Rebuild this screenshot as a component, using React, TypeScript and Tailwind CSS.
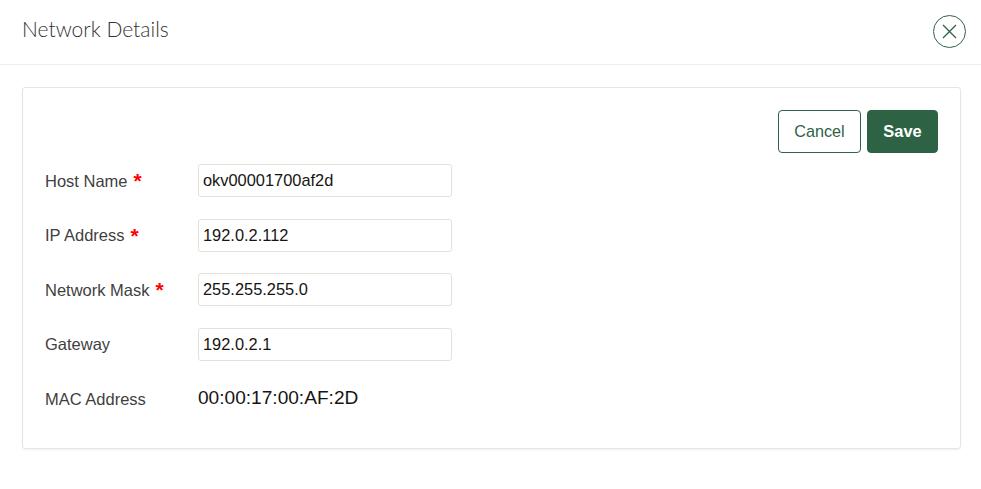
import React from "react";

function Row({ label, required, value }: { label: string; required?: boolean; value: string }) {
  return (
    <div className="flex items-center h-[33px] mb-[21.5px]">
      <label className="w-[153px] shrink-0 flex items-center text-[16.5px] text-[#3f3f3f] pt-[1px]">
        {label}
        {required && <span className="ml-[6px] text-[#ff0000] text-[21px] font-bold leading-none -mt-[1px]">*</span>}
      </label>
      <input
        readOnly
        value={value}
        className="w-[254px] h-[33px] px-[4px] text-[16.4px] text-[#161513] bg-white border border-[#e4e1d8] rounded-[3px] outline-none"
      />
    </div>
  );
}

export default function App() {
  return (
    <div className="w-[981px] h-[489px] bg-white font-['Liberation_Sans',Arial,sans-serif] overflow-hidden">
      <header className="h-[65px] border-b border-[#eeeeee] flex items-start justify-between pl-[22px] pr-[15px]">
        <h1 className="font-['Lato',sans-serif] font-light text-[21px] leading-[28px] mt-[15px] text-[#333333]">Network Details</h1>
        <button className="w-[33px] h-[33px] mt-[15px] rounded-full border border-[#2f6246] flex items-center justify-center bg-white">
          <svg width="17" height="17" viewBox="0 0 17 17" fill="none" stroke="#2f6246" strokeWidth="1.3">
            <path d="M2 2 L15 15 M15 2 L2 15" />
          </svg>
        </button>
      </header>
      <main className="pt-[22px] px-[20px] pr-[20px]">
        <section className="w-[939px] h-[362px] ml-[2px] border border-[#e5e5e5] rounded-[3px] shadow-[0_1px_2px_rgba(0,0,0,0.06)] pl-[22px] pr-[22px] pt-[22px]">
          <div className="flex justify-end gap-[6px] mb-[11px]">
            <button className="w-[83px] h-[43px] text-[16.2px] text-[#2f6246] bg-white border border-[#2f6246] rounded-[4px]">
              Cancel
            </button>
            <button className="w-[71px] h-[43px] text-[16.4px] font-bold text-white bg-[#2d6244] border border-[#2d6244] rounded-[4px]">
              Save
            </button>
          </div>
          <Row label="Host Name" required value="okv00001700af2d" />
          <Row label="IP Address" required value="192.0.2.112" />
          <Row label="Network Mask" required value="255.255.255.0" />
          <Row label="Gateway" value="192.0.2.1" />
          <div className="flex items-center h-[33px]">
            <span className="w-[153px] shrink-0 text-[16.5px] text-[#3f3f3f] pt-[1px]">MAC Address</span>
            <span className="text-[19.1px] text-[#161513]">00:00:17:00:AF:2D</span>
          </div>
        </section>
      </main>
    </div>
  );
}
